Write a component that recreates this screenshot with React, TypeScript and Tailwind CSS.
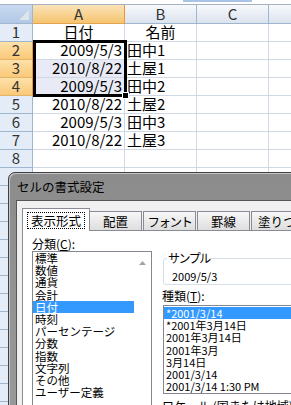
const data: [string, string][] = [
  ['日付', '名前'],
  ['2009/5/3', '田中1'],
  ['2010/8/22', '土屋1'],
  ['2009/5/3', '田中2'],
  ['2010/8/22', '土屋2'],
  ['2009/5/3', '田中3'],
  ['2010/8/22', '土屋3'],
];

const categories = ['標準', '数値', '通貨', '会計', '日付', '時刻', 'パーセンテージ', '分数', '指数', '文字列', 'その他', 'ユーザー定義'];
const types = ['*2001/3/14', '*2001年3月14日', '2001年3月14日', '2001年3月', '3月14日', '2001/3/14', '2001/3/14 1:30 PM'];

function SheetRow({ n }: { n: number }) {
  const row = data[n - 1];
  const selected = n >= 2 && n <= 4;
  const tinted = n === 3 || n === 4;
  return (
    <div className="flex h-[18px] shrink-0">
      <div
        className={
          selected
            ? 'w-[33px] shrink-0 flex items-center justify-center border-b border-r border-b-[#e3b46a] border-r-[#f29436] bg-gradient-to-b from-[#fee1a9] to-[#f9c978] text-[15px] text-[#333]'
            : 'w-[33px] shrink-0 flex items-center justify-center border-b border-r border-[#9eb6ce] bg-[#e4ecf7] text-[15px] text-[#333]'
        }
      >
        {n <= 8 ? n : null}
      </div>
      <div
        className={
          tinted
            ? 'w-[92px] shrink-0 flex items-center justify-end pr-[2px] border-b border-r border-[#d0d7e5] bg-[#e8ebf5] text-[15px]'
            : n === 1
              ? 'w-[92px] shrink-0 flex items-center justify-center border-b border-r border-[#d0d7e5] text-[15px]'
              : 'w-[92px] shrink-0 flex items-center justify-end pr-[2px] border-b border-r border-[#d0d7e5] text-[15px]'
        }
      >
        {row?.[0]}
      </div>
      <div
        className={
          n === 1
            ? 'w-[72px] shrink-0 flex items-center justify-center border-b border-r border-[#d0d7e5] text-[15px]'
            : 'w-[72px] shrink-0 flex items-center pl-[2px] border-b border-r border-[#d0d7e5] text-[15px]'
        }
      >
        {row?.[1]}
      </div>
      <div className="w-[72px] shrink-0 border-b border-r border-[#d0d7e5]" />
      <div className="w-[100px] shrink-0 border-b border-r border-[#d0d7e5]" />
    </div>
  );
}

function Dialog() {
  return (
    <div className="absolute left-[8px] top-[172px] w-[300px] h-[260px] rounded-tl-[7px] border border-[#3f3f3f] bg-gradient-to-b from-[#8c8c8c] to-[#9a9a9a] shadow-[inset_1px_1px_0_#c8c8c8] flex flex-col">
      <div className="h-[27px] shrink-0 flex items-center pl-[8px] text-[12.5px] leading-[14px] text-black whitespace-nowrap">
        セルの書式設定
      </div>
      <div className="ml-[7px] flex-1 flex flex-col border-l border-t border-[#555] bg-[#f0f0f0] pl-[5px] pt-[7px]">
        <div className="flex items-end h-[22px] shrink-0 text-[12.5px] leading-[13px] whitespace-nowrap">
          <div className="relative z-10 w-[68px] h-[23px] shrink-0 -mb-px border border-b-0 border-[#898c95] bg-white flex items-center justify-center">
            <span className="border border-dotted border-black px-[3px] py-[1px]">表示形式</span>
          </div>
          <div className="w-[52px] h-[19px] shrink-0 border border-b-0 border-l-0 border-[#898c95] bg-gradient-to-b from-[#f7f7f7] to-[#dedede] flex items-center justify-center">
            配置
          </div>
          <div className="ml-[1px] w-[53px] h-[19px] shrink-0 border border-b-0 border-[#898c95] bg-gradient-to-b from-[#f7f7f7] to-[#dedede] flex items-center justify-center tracking-[-1.5px]">
            フォント
          </div>
          <div className="ml-[1px] w-[53px] h-[19px] shrink-0 border border-b-0 border-[#898c95] bg-gradient-to-b from-[#f7f7f7] to-[#dedede] flex items-center justify-center">
            罫線
          </div>
          <div className="ml-[1px] w-[70px] h-[19px] shrink-0 border border-b-0 border-[#898c95] bg-gradient-to-b from-[#f7f7f7] to-[#dedede] flex items-center pl-[6px]">
            塗りつぶし
          </div>
        </div>
        <div className="flex-1 flex bg-white border-t border-l border-[#898c95] pl-[9px] pt-[5px] text-[12px]">
          <div className="w-[120px] shrink-0 flex flex-col">
            <div className="h-[15px] leading-[15px] whitespace-nowrap">
              分類(<span className="underline">C</span>):
            </div>
            <div className="h-[200px] flex border border-[#828790]">
              <div className="w-[101px] flex flex-col text-[11.5px]">
                {categories.map((c) => (
                  <div
                    key={c}
                    className={
                      c === '日付'
                        ? 'h-[12.2px] leading-[12.2px] pl-[2px] bg-[#3399ff] text-white whitespace-nowrap'
                        : 'h-[12.2px] leading-[12.2px] pl-[2px] whitespace-nowrap'
                    }
                  >
                    {c}
                  </div>
                ))}
              </div>
              <div className="flex-1 flex justify-center pt-[9px]">
                <svg width="7" height="4" viewBox="0 0 7 4">
                  <polygon points="0,4 3.5,0 7,4" fill="#a3a3a3" />
                </svg>
              </div>
            </div>
          </div>
          <div className="ml-[10px] w-[200px] shrink-0 flex flex-col">
            <fieldset className="ml-[1px] mt-[16px] border border-[#d5dfe5] rounded-[3px] pl-[3px] pb-[2px]">
              <legend className="px-[1px] text-[12px] leading-[12px] tracking-[-1.5px]">サンプル</legend>
              <div className="pl-[5px] pt-[6px] text-[11px] leading-[12px]">2009/5/3</div>
            </fieldset>
            <div className="mt-[5px] h-[12px] leading-[12px] whitespace-nowrap">
              種類(<span className="underline">T</span>):
            </div>
            <div className="ml-[1px] mt-[3px] h-[89px] border border-[#828790] pt-[1px] text-[11px]">
              {types.map((t, i) => (
                <div
                  key={t}
                  className={
                    i === 0
                      ? 'h-[12.2px] leading-[12.2px] pl-[2px] bg-[#3399ff] text-white whitespace-nowrap'
                      : 'h-[12.2px] leading-[12.2px] pl-[2px] whitespace-nowrap'
                  }
                >
                  {t}
                </div>
              ))}
            </div>
            <div className="mt-[6px] leading-[12px] whitespace-nowrap">
              ロケール (国または地域)(<span className="underline">L</span>):
            </div>
          </div>
        </div>
      </div>
    </div>
  );
}

export default function App() {
  const rowNumbers = Array.from({ length: 22 }, (_, i) => i + 1);
  return (
    <div className="relative w-[291px] h-[405px] overflow-hidden bg-white text-black font-['Noto_Sans_CJK_JP',sans-serif]">
      {/* formula bar edge */}
      <div className="relative h-[5px] border-b border-[#a7b2c0]">
        <div className="absolute left-[183px] top-0 w-[69px] h-[2px] bg-[#a9c4e6]" />
      </div>

      {/* column headers */}
      <div className="flex h-[19px]">
        <div className="w-[33px] shrink-0 border-b border-r border-[#9eb6ce] bg-gradient-to-b from-[#c9daf0] to-[#b2c8e6] flex items-end justify-end pr-[3px] pb-[3px]">
          <svg width="10" height="10" viewBox="0 0 10 10">
            <polygon points="10,0 10,10 0,10" fill="#dfe4ea" />
          </svg>
        </div>
        <div className="w-[92px] shrink-0 border-b border-r border-b-[#e3a553] border-r-[#f29436] bg-gradient-to-b from-[#fbe3b8] to-[#f5c46d] flex items-center justify-center text-[15px] text-[#333]">
          A
        </div>
        <div className="w-[72px] shrink-0 border-b border-r border-[#9eb6ce] bg-gradient-to-b from-[#f7f9fc] to-[#dbe3ee] flex items-center justify-center text-[15px] text-[#333]">
          B
        </div>
        <div className="w-[72px] shrink-0 border-b border-r border-[#9eb6ce] bg-gradient-to-b from-[#f7f9fc] to-[#dbe3ee] flex items-center justify-center text-[15px] text-[#333]">
          C
        </div>
        <div className="w-[100px] shrink-0 border-b border-r border-[#9eb6ce] bg-gradient-to-b from-[#f7f9fc] to-[#dbe3ee]" />
      </div>

      <div className="flex flex-col">
        {rowNumbers.map((n) => (
          <SheetRow key={n} n={n} />
        ))}
      </div>

      {/* selection A2:A4 */}
      <div className="absolute left-[33px] top-[40px] w-[94px] h-[57px] border-[3px] border-black" />
      <div className="absolute left-[122px] top-[92px] w-[7px] h-[7px] bg-black border border-white" />

      <Dialog />
    </div>
  );
}
